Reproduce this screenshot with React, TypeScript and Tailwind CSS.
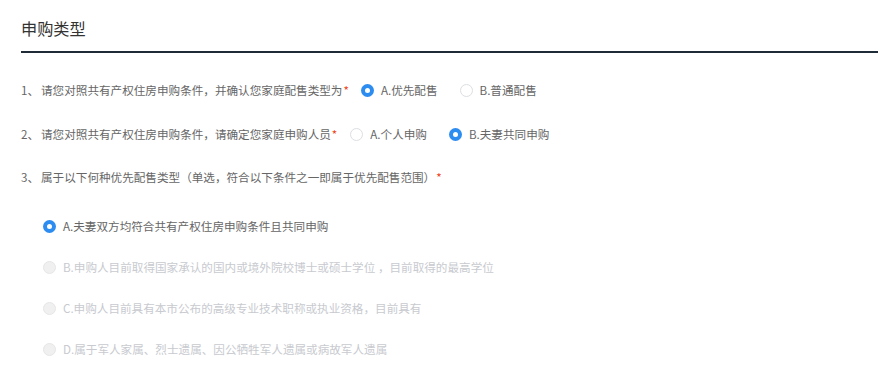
import React from "react";

const font = { fontFamily: '"Microsoft YaHei", "Noto Sans CJK SC", "Noto Sans", sans-serif' };

function Radio({ checked, disabled }: { checked?: boolean; disabled?: boolean }) {
  if (checked) {
    return (
      <span className="inline-flex w-[13px] h-[13px] rounded-full bg-[#2d8cf0] items-center justify-center shrink-0">
        <span className="w-[5px] h-[5px] rounded-full bg-white" />
      </span>
    );
  }
  if (disabled) {
    return <span className="inline-block w-[13px] h-[13px] rounded-full bg-[#f0f0f0] border border-[#e6e6e6] shrink-0" />;
  }
  return <span className="inline-block w-[13px] h-[13px] rounded-full bg-white border border-[#dcdee2] shrink-0" />;
}

function Opt({ label, checked, disabled, cls }: { label: string; checked?: boolean; disabled?: boolean; cls?: string }) {
  return (
    <span className={"inline-flex items-center gap-[7px] " + (cls ?? "")}>
      <Radio checked={checked} disabled={disabled} />
      <span className={disabled ? "text-[#c8cacf]" : "text-[#666]"}>{label}</span>
    </span>
  );
}

export default function App() {
  return (
    <div className="w-[892px] h-[377px] bg-white overflow-hidden" style={font}>
      <div className="ml-[21px] w-[857px] pt-[16px] pb-[11px] border-b-2 border-[#1f2b36]">
        <div className="text-[16.2px] leading-[24px] text-[#333]">申购类型</div>
      </div>
      <div className="pl-[21px] text-[11.6px] text-[#666]">
        <div className="mt-[28px] h-[20px] flex items-center">
          <span className="w-[20px]">1、</span>
          <span>请您对照共有产权住房申购条件，并确认您家庭配售类型为</span>
          <span className="text-[#ed4014] ml-[1px]">*</span>
          <Opt label="A.优先配售" checked cls="ml-[12px]" />
          <Opt label="B.普通配售" cls="ml-[22px]" />
        </div>
        <div className="mt-[24px] h-[20px] flex items-center">
          <span className="w-[20px]">2、</span>
          <span>请您对照共有产权住房申购条件，请确定您家庭申购人员</span>
          <span className="text-[#ed4014] ml-[1px]">*</span>
          <Opt label="A.个人申购" cls="ml-[13px]" />
          <Opt label="B.夫妻共同申购" checked cls="ml-[22px]" />
        </div>
        <div className="mt-[23px] h-[20px] flex items-center">
          <span className="w-[20px]">3、</span>
          <span>属于以下何种优先配售类型（单选，符合以下条件之一即属于优先配售范围）</span>
          <span className="text-[#ed4014] ml-[1px]">*</span>
        </div>
        <div className="pl-[22px]">
          <div className="mt-[29px] h-[20px] flex items-center">
            <Opt label="A.夫妻双方均符合共有产权住房申购条件且共同申购" checked />
          </div>
          <div className="mt-[21px] h-[20px] flex items-center">
            <Opt label="B.申购人目前取得国家承认的国内或境外院校博士或硕士学位 ，目前取得的最高学位" disabled />
          </div>
          <div className="mt-[21px] h-[20px] flex items-center">
            <Opt label="C.申购人目前具有本市公布的高级专业技术职称或执业资格，目前具有" disabled />
          </div>
          <div className="mt-[21px] h-[20px] flex items-center">
            <Opt label="D.属于军人家属、烈士遗属、因公牺牲军人遗属或病故军人遗属" disabled />
          </div>
        </div>
      </div>
    </div>
  );
}
